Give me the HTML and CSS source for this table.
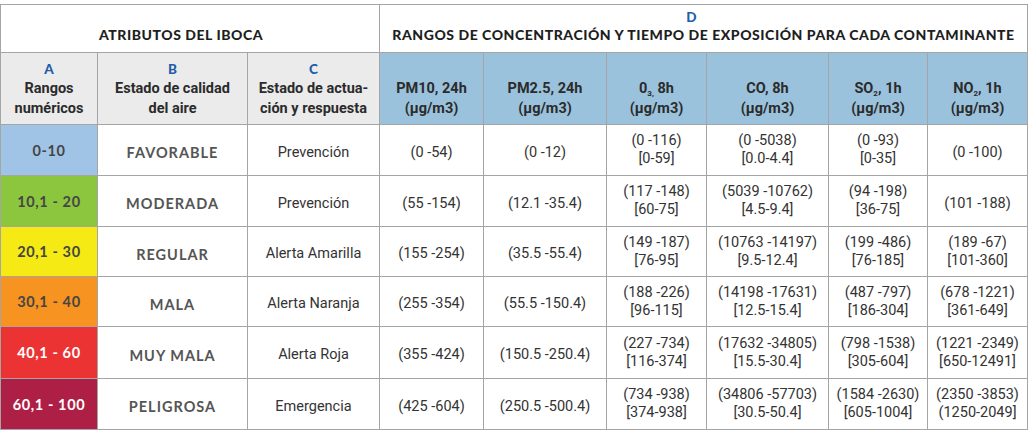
FILE: index.html
```html
<!DOCTYPE html>
<html lang="es">
<head>
<meta charset="utf-8">
<title>IBOCA</title>
<link rel="stylesheet" href="styles.css">
</head>
<body>
<div class="table">
  <div class="cell h1 span3"><span class="title attr">ATRIBUTOS DEL IBOCA</span></div>
  <div class="cell h1 span6"><span class="letter">D</span><span class="title">RANGOS DE CONCENTRACIÓN Y TIEMPO DE EXPOSICIÓN PARA CADA CONTAMINANTE</span></div>

  <div class="cell h2 gray"><span class="letter">A</span><span>Rangos</span><span>numéricos</span></div>
  <div class="cell h2 gray"><span class="letter">B</span><span>Estado de calidad</span><span>del aire</span></div>
  <div class="cell h2 gray"><span class="letter">C</span><span>Estado de actua-</span><span>ción y respuesta</span></div>
  <div class="cell h2 blue"><span>PM10, 24h</span><span>(µg/m3)</span></div>
  <div class="cell h2 blue"><span>PM2.5, 24h</span><span>(µg/m3)</span></div>
  <div class="cell h2 blue"><span>0<sub>3,</sub> 8h</span><span>(µg/m3)</span></div>
  <div class="cell h2 blue"><span>CO, 8h</span><span>(µg/m3)</span></div>
  <div class="cell h2 blue"><span>SO<sub>2</sub>, 1h</span><span>(µg/m3)</span></div>
  <div class="cell h2 blue"><span>NO<sub>2</sub>, 1h</span><span>(µg/m3)</span></div>

  <div class="cell range c1">0-10</div>
  <div class="cell state">FAVORABLE</div>
  <div class="cell txt">Prevención</div>
  <div class="cell txt">(0 -54)</div>
  <div class="cell txt">(0 -12)</div>
  <div class="cell txt two"><span>(0 -116)</span><span>[0-59]</span></div>
  <div class="cell txt two"><span>(0 -5038)</span><span>[0.0-4.4]</span></div>
  <div class="cell txt two"><span>(0 -93)</span><span>[0-35]</span></div>
  <div class="cell txt">(0 -100)</div>

  <div class="cell range c2">10,1 - 20</div>
  <div class="cell state">MODERADA</div>
  <div class="cell txt">Prevención</div>
  <div class="cell txt">(55 -154)</div>
  <div class="cell txt">(12.1 -35.4)</div>
  <div class="cell txt two"><span>(117 -148)</span><span>[60-75]</span></div>
  <div class="cell txt two"><span>(5039 -10762)</span><span>[4.5-9.4]</span></div>
  <div class="cell txt two"><span>(94 -198)</span><span>[36-75]</span></div>
  <div class="cell txt">(101 -188)</div>

  <div class="cell range c3">20,1 - 30</div>
  <div class="cell state">REGULAR</div>
  <div class="cell txt">Alerta Amarilla</div>
  <div class="cell txt">(155 -254)</div>
  <div class="cell txt">(35.5 -55.4)</div>
  <div class="cell txt two"><span>(149 -187)</span><span>[76-95]</span></div>
  <div class="cell txt two"><span>(10763 -14197)</span><span>[9.5-12.4]</span></div>
  <div class="cell txt two"><span>(199 -486)</span><span>[76-185]</span></div>
  <div class="cell txt two"><span>(189 -67)</span><span>[101-360]</span></div>

  <div class="cell range c4">30,1 - 40</div>
  <div class="cell state">MALA</div>
  <div class="cell txt">Alerta Naranja</div>
  <div class="cell txt">(255 -354)</div>
  <div class="cell txt">(55.5 -150.4)</div>
  <div class="cell txt two"><span>(188 -226)</span><span>[96-115]</span></div>
  <div class="cell txt two"><span>(14198 -17631)</span><span>[12.5-15.4]</span></div>
  <div class="cell txt two"><span>(487 -797)</span><span>[186-304]</span></div>
  <div class="cell txt two"><span>(678 -1221)</span><span>[361-649]</span></div>

  <div class="cell range c5">40,1 - 60</div>
  <div class="cell state">MUY MALA</div>
  <div class="cell txt">Alerta Roja</div>
  <div class="cell txt">(355 -424)</div>
  <div class="cell txt">(150.5 -250.4)</div>
  <div class="cell txt two"><span>(227 -734)</span><span>[116-374]</span></div>
  <div class="cell txt two"><span>(17632 -34805)</span><span>[15.5-30.4]</span></div>
  <div class="cell txt two"><span>(798 -1538)</span><span>[305-604]</span></div>
  <div class="cell txt two"><span>(1221 -2349)</span><span>[650-12491]</span></div>

  <div class="cell range c6">60,1 - 100</div>
  <div class="cell state">PELIGROSA</div>
  <div class="cell txt">Emergencia</div>
  <div class="cell txt">(425 -604)</div>
  <div class="cell txt">(250.5 -500.4)</div>
  <div class="cell txt two"><span>(734 -938)</span><span>[374-938]</span></div>
  <div class="cell txt two"><span>(34806 -57703)</span><span>[30.5-50.4]</span></div>
  <div class="cell txt two"><span>(1584 -2630)</span><span>[605-1004]</span></div>
  <div class="cell txt two"><span>(2350 -3853)</span><span>(1250-2049]</span></div>
</div>
</body>
</html>
```
FILE: styles.css
```css
html, body {
  margin: 0;
  padding: 0;
  background: #ffffff;
}

body {
  padding-top: 4px;
  font-family: Roboto, "Liberation Sans", sans-serif;
  color: #333333;
}

.table {
  display: grid;
  grid-template-columns: 96px 149px 131px 103px 122px 99px 121px 98px 99px;
  grid-template-rows: 47px 71px 50px 50px 49px 49px 51px 50px;
  gap: 1px;
  padding: 1px;
  width: max-content;
  background: #a5a5a5;
}

.cell {
  background: #ffffff;
  display: flex;
  flex-direction: column;
  align-items: center;
  justify-content: center;
  text-align: center;
  white-space: nowrap;
}

.span3 { grid-column: span 3; }
.span6 { grid-column: span 6; }

.h1 {
  justify-content: flex-end;
  padding-bottom: 9px;
  line-height: 17px;
}

.title {
  font-family: Lato, "DejaVu Sans", sans-serif;
  font-weight: 900;
  font-size: 14px;
  letter-spacing: 0.55px;
  color: #1e1e1e;
}

.attr {
  margin-right: 18px;
}

.letter {
  font-family: Lato, "DejaVu Sans", sans-serif;
  font-weight: 900;
  font-size: 13.5px;
  color: #1f5da8;
}

.span6 .letter {
  margin-right: 24px;
}

.h2 {
  justify-content: flex-end;
  padding-bottom: 5px;
  line-height: 20px;
  font-weight: 700;
  font-size: 14.5px;
  color: #2b2b2b;
}

.h2 sub {
  font-size: 8px;
  line-height: 0;
  vertical-align: -3px;
}

.gray { background: #ebebeb; }
.blue { background: #9ac2dc; }

.range {
  font-family: Lato, "DejaVu Sans", sans-serif;
  font-weight: 700;
  font-size: 14.5px;
  letter-spacing: 0.6px;
  color: #454545;
}

.c1 { background: #9fc4e6; }
.c2 { background: #8cc63f; }
.c3 { background: #f5ea14; }
.c4 { background: #f79321; }
.c5 { background: #ec3334; color: #ffffff; }
.c6 { background: #ae1f46; color: #ffffff; }

.state {
  font-family: Lato, "DejaVu Sans", sans-serif;
  font-weight: 700;
  font-size: 14.5px;
  letter-spacing: 1px;
  color: #555555;
  padding-top: 5px;
}

.txt {
  font-size: 14.5px;
  line-height: 18px;
  color: #333333;
  padding-top: 5px;
}

.txt.two {
  padding-top: 0;
}
```
